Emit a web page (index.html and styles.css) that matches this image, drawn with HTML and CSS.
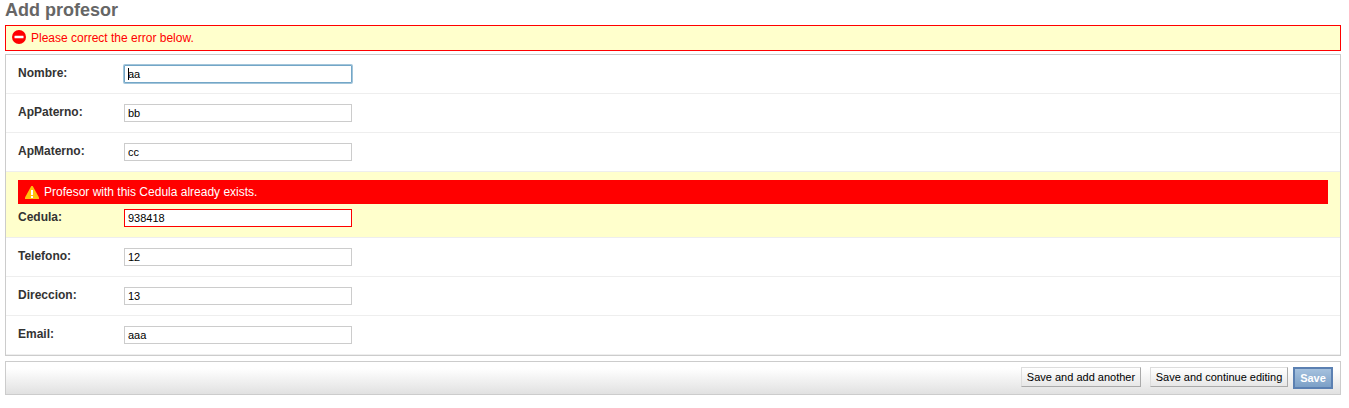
FILE: index.html
```html
<!DOCTYPE html>
<html lang="en">
<head>
<meta charset="utf-8">
<title>Add profesor</title>
<link rel="stylesheet" href="styles.css">
</head>
<body>
<h1>Add profesor</h1>
<form class="form">
  <p class="errornote">
    <svg width="14" height="14" viewBox="0 0 14 14"><circle cx="7" cy="7" r="7" fill="#f00"/><rect x="2.5" y="5.7" width="9" height="2.6" rx=".4" fill="#fff"/></svg>
    <span>Please correct the error below.</span>
  </p>
  <fieldset class="module">
    <div class="row"><div class="field"><label for="nombre">Nombre:</label><div class="control"><input class="focused" id="nombre" type="text" value="aa"><i class="caret"></i></div></div></div>
    <div class="row"><div class="field"><label for="paterno">ApPaterno:</label><input id="paterno" type="text" value="bb"></div></div>
    <div class="row"><div class="field"><label for="materno">ApMaterno:</label><input id="materno" type="text" value="cc"></div></div>
    <div class="row errors">
      <div class="errorlist">
        <svg width="14" height="13" viewBox="0 0 14 13"><path d="M6.3 0h1.4L14 11.5V13H0v-1.5z" fill="#ffc20e"/><path d="M6 4h2v5H6zM6 10h2v2H6z" fill="#fff"/></svg>
        <span>Profesor with this Cedula already exists.</span>
      </div>
      <div class="field"><label for="cedula">Cedula:</label><input id="cedula" type="text" value="938418"></div>
    </div>
    <div class="row"><div class="field"><label for="telefono">Telefono:</label><input id="telefono" type="text" value="12"></div></div>
    <div class="row"><div class="field"><label for="direccion">Direccion:</label><input id="direccion" type="text" value="13"></div></div>
    <div class="row"><div class="field"><label for="email">Email:</label><input id="email" type="text" value="aaa"></div></div>
  </fieldset>
  <div class="submit-row">
    <button class="button another" type="button">Save and add another</button>
    <button class="button continue" type="button">Save and continue editing</button>
    <button class="button default" type="button">Save</button>
  </div>
</form>
</body>
</html>
```
FILE: styles.css
```css
* { box-sizing: border-box; }
body {
  margin: 0;
  padding: 0 8px 0 5px;
  background: #fff;
  color: #333;
  font: 12px/14px "Liberation Sans", Arial, sans-serif;
  overflow: hidden;
}
h1 {
  margin: 0;
  height: 25px;
  font-size: 18px;
  line-height: 20px;
  color: #666;
}
.form { display: flex; flex-direction: column; }
.errornote {
  display: flex;
  align-items: center;
  gap: 5px;
  height: 26px;
  margin: 0 0 3px;
  padding: 0 6px;
  border: 1px solid #f00;
  background: #ffc;
  color: #f00;
}
.errornote svg { margin-top: -2px; }
.module {
  min-width: 0;
  margin: 0 0 5px;
  padding: 0;
  border: 1px solid #ccc;
}
.row {
  height: 39px;
  padding: 10px 12px 0;
  border-bottom: 1px solid #eee;
}
.field { display: flex; }
label {
  width: 106px;
  padding-top: 1px;
  font-weight: bold;
}
input {
  display: block;
  width: 228px;
  height: 18px;
  margin: 0;
  padding: 0 3px 1px;
  border: 1px solid #ccc;
  background: #fff;
  color: #000;
  font: 11px "Liberation Sans", Arial, sans-serif;
  outline: none;
}
.control { position: relative; }
.focused {
  border-color: #73a6c7;
  border-radius: 1px;
  box-shadow: 0 0 0 1px #a2c5da;
}
.caret {
  position: absolute;
  left: 4px;
  top: 3px;
  width: 1px;
  height: 12px;
  background: #000;
}
.errors {
  height: 66px;
  padding-top: 8px;
  background: #ffc;
}
.errors input { border-color: #f00; }
.errorlist {
  display: flex;
  align-items: center;
  gap: 5px;
  height: 24px;
  margin-bottom: 5px;
  padding: 0 7px;
  background: #f00;
  color: #fff;
}
.errorlist svg { margin-top: 1px; }
.submit-row {
  display: flex;
  justify-content: flex-end;
  align-items: flex-start;
  height: 34px;
  padding: 5px 7px 0;
  border: 1px solid #ccc;
  background: linear-gradient(#fff 20%, #e1e1e1);
}
.button {
  height: 20px;
  margin: 0;
  padding: 0;
  border: 1px solid;
  border-color: #ddd #aaa #aaa #ddd;
  background: linear-gradient(#fff, #e7e7e7);
  color: #000;
  font: 11px/18px "Liberation Sans", Arial, sans-serif;
  white-space: nowrap;
}
.another { width: 120px; margin-right: 9px; }
.continue { width: 138px; margin-right: 5px; }
.default {
  width: 40px;
  height: 22px;
  border: 2px solid #5b80b2;
  background: linear-gradient(#a5c1de, #7ca0c7);
  color: #fff;
  font-weight: bold;
}
```
